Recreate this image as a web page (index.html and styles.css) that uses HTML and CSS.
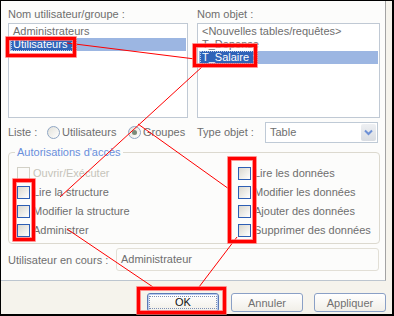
FILE: index.html
```html
<!DOCTYPE html>
<html lang="fr">
<head>
    <meta charset="UTF-8">
    <title>Autorisations d'accès</title>
    <link rel="stylesheet" href="styles.css">
</head>
<body>
    <div class="frame">
        <div class="page">
            <div class="lists">
                <div class="col">
                    <div class="lbl">Nom utilisateur/groupe :</div>
                    <ul class="listbox">
                        <li>Administrateurs</li>
                        <li class="sel"><span class="hl">Utilisateurs :</span></li>
                    </ul>
                </div>
                <div class="col">
                    <div class="lbl">Nom objet :</div>
                    <ul class="listbox">
                        <li>&lt;Nouvelles tables/requêtes&gt;</li>
                        <li>T_Depense</li>
                        <li class="sel"><span class="hl">T_Salaire :</span></li>
                    </ul>
                </div>
            </div>

            <div class="options">
                <div class="opt-left">
                    <span class="opt-label">Liste :</span>
                    <span class="radio-item first"><span class="radio"></span>Utilisateurs</span>
                    <span class="radio-item"><span class="radio on"></span>Groupes</span>
                </div>
                <div class="opt-right">
                    <span class="type-label">Type objet :</span>
                    <div class="combo">
                        <span>Table</span>
                        <span class="drop">
                            <svg width="9" height="7" viewBox="0 0 9 7"><path d="M1 1.5 L4.5 5 L8 1.5" fill="none" stroke="#6d90d6" stroke-width="2"/></svg>
                        </span>
                    </div>
                </div>
            </div>

            <fieldset class="perms">
                <legend>Autorisations d'accès</legend>
                <div class="perm-grid">
                    <div class="perm-col">
                        <div class="check-row disabled"><span class="box"></span>Ouvrir/Exécuter</div>
                        <div class="check-row"><span class="box"></span>Lire la structure</div>
                        <div class="check-row"><span class="box"></span>Modifier la structure</div>
                        <div class="check-row"><span class="box"></span>Administrer</div>
                    </div>
                    <div class="perm-col">
                        <div class="check-row"><span class="box"></span>Lire les données</div>
                        <div class="check-row"><span class="box"></span>Modifier les données</div>
                        <div class="check-row"><span class="box"></span>Ajouter des données</div>
                        <div class="check-row"><span class="box"></span>Supprimer des données</div>
                    </div>
                </div>
            </fieldset>

            <div class="current">
                <span class="current-label">Utilisateur en cours :</span>
                <div class="current-box">Administrateur</div>
            </div>
        </div>

        <div class="buttons">
            <button class="btn ok"><span>OK</span></button>
            <button class="btn">Annuler</button>
            <button class="btn">Appliquer</button>
        </div>
    </div>

    <!-- red annotation marks drawn over the dialog -->
    <svg class="marks" width="394" height="316" viewBox="0 0 394 316">
        <g fill="none" stroke="#ff0000">
            <line x1="67" y1="43" x2="195" y2="59"/>
            <line x1="203" y1="66" x2="60" y2="197"/>
            <line x1="138" y1="124" x2="229" y2="189"/>
            <line x1="67" y1="229" x2="153" y2="287"/>
            <line x1="237" y1="237" x2="199" y2="287"/>
        </g>
        <g fill="none" stroke="#ff7070" stroke-width="4.5">
            <rect x="7.5" y="38.5" width="67" height="17"/>
            <rect x="194.5" y="45.5" width="61" height="20"/>
            <rect x="14.5" y="180.5" width="19" height="59"/>
            <rect x="229.5" y="158.5" width="25" height="83"/>
            <rect x="138.5" y="288.5" width="86" height="24"/>
        </g>
        <g fill="none" stroke="#ff0000" stroke-width="3">
            <rect x="7.5" y="38.5" width="67" height="17"/>
            <rect x="194.5" y="45.5" width="61" height="20"/>
            <rect x="14.5" y="180.5" width="19" height="59"/>
            <rect x="229.5" y="158.5" width="25" height="83"/>
            <rect x="138.5" y="288.5" width="86" height="24"/>
        </g>
    </svg>
</body>
</html>
```

FILE: styles.css
```css
body {
    margin: 0;
    font-family: "Liberation Sans", Arial, sans-serif;
    font-size: 11px;
    color: #6e6e6e;
    background: #fff;
}
.frame {
    width: 391px;
    height: 313px;
    border: solid #000;
    border-width: 1px 2px 2px 1px;
    background-color: #f5f3ec;
}
.page {
    box-sizing: border-box;
    width: 385px;
    height: 280px;
    padding: 7px 5px 0 7px;
    background-color: #fcfcfb;
    border-right: 1px solid #a3a3a3;
    border-bottom: 1px solid #bcc5cf;
}
.lists {
    display: grid;
    grid-template-columns: 180px 183px;
    column-gap: 9px;
}
.lbl {
    line-height: 13px;
    height: 13px;
}
.listbox {
    box-sizing: border-box;
    height: 95px;
    margin: 2px 0 0;
    padding: 1px;
    list-style: none;
    background-color: #fff;
    border: 1px solid #c0c9d4;
}
.listbox li {
    height: 13px;
    line-height: 13px;
    padding-left: 3px;
    white-space: nowrap;
}
.listbox li.sel {
    background-color: #9cb6e2;
}
.hl {
    display: inline-block;
    margin-left: -2px;
    padding: 0 3px 0 2px;
    color: #fff;
    background-color: #2f63b8;
    outline: 1px dotted #b8c8e8;
    outline-offset: -1px;
}
.options {
    display: grid;
    grid-template-columns: 180px 183px;
    column-gap: 9px;
    height: 21px;
    margin-top: 4px;
}
.opt-left, .opt-right {
    display: flex;
    align-items: center;
    line-height: 13px;
}
.opt-label {
    width: 39px;
}
.radio-item {
    display: flex;
    align-items: center;
}
.radio-item.first {
    width: 81px;
}
.radio {
    box-sizing: border-box;
    width: 13px;
    height: 13px;
    margin-right: 2px;
    border: 1px solid #8fa6c4;
    border-radius: 50%;
    background: linear-gradient(135deg, #e2e1da, #fff);
    position: relative;
}
.radio.on::after {
    content: "";
    position: absolute;
    left: 3px;
    top: 3px;
    width: 5px;
    height: 5px;
    border-radius: 50%;
    background-color: #7a8a7a;
}
.type-label {
    width: 68px;
}
.combo {
    box-sizing: border-box;
    display: flex;
    align-items: center;
    justify-content: space-between;
    width: 113px;
    height: 21px;
    padding-left: 4px;
    border: 1px solid #bfcad6;
    background-color: #fff;
}
.drop {
    display: flex;
    align-items: center;
    justify-content: center;
    width: 15px;
    height: 17px;
    margin-right: 1px;
    border-radius: 2px;
    background: linear-gradient(#eef0f3, #d8dce2);
}
.perms {
    margin: 3px 0 0;
    padding: 8px 0 6px 8px;
    min-width: 0;
    border: 1px solid #dcd9cf;
    border-radius: 4px;
}
.perms legend {
    padding: 0 2px;
    margin-left: -2px;
    line-height: 13px;
    color: #6a8fdb;
}
.perm-grid {
    display: grid;
    grid-template-columns: 221px 1fr;
}
.perm-col {
    display: flex;
    flex-direction: column;
    gap: 6px;
}
.check-row {
    display: flex;
    align-items: center;
    height: 13px;
    line-height: 13px;
    white-space: nowrap;
}
.box {
    box-sizing: border-box;
    width: 13px;
    height: 13px;
    margin-right: 3px;
    border: 1px solid #2d5eb4;
    background: linear-gradient(135deg, #d9d7ce, #fff);
}
.check-row.disabled {
    color: #c6c4ba;
}
.check-row.disabled .box {
    border-color: #d2d0c6;
    background: #fbfbf9;
}
.current {
    display: grid;
    grid-template-columns: 108px 263px;
    align-items: center;
    margin-top: 4px;
}
.current-box {
    box-sizing: border-box;
    height: 23px;
    line-height: 21px;
    padding-left: 4px;
    border: 1px solid #e2dfd6;
    border-radius: 3px;
}
.buttons {
    display: flex;
    justify-content: flex-end;
    gap: 11px;
    padding: 12px 6px 0 0;
}
.btn {
    box-sizing: border-box;
    width: 72px;
    height: 19px;
    padding: 0;
    font-family: inherit;
    font-size: 11px;
    color: #707070;
    border: 1px solid #8aa0c6;
    border-radius: 3px;
    background: linear-gradient(#ffffff, #f1efe8);
}
.btn.ok {
    margin-right: 1px;
    color: #111;
    border-color: #5b79b5;
    box-shadow: inset 0 0 0 1px #b7cbf0;
}
.btn.ok span {
    display: block;
    margin: 2px;
    line-height: 11px;
    outline: 1px dotted #7d8fb5;
}
.marks {
    position: absolute;
    left: 0;
    top: 0;
    pointer-events: none;
}
```
